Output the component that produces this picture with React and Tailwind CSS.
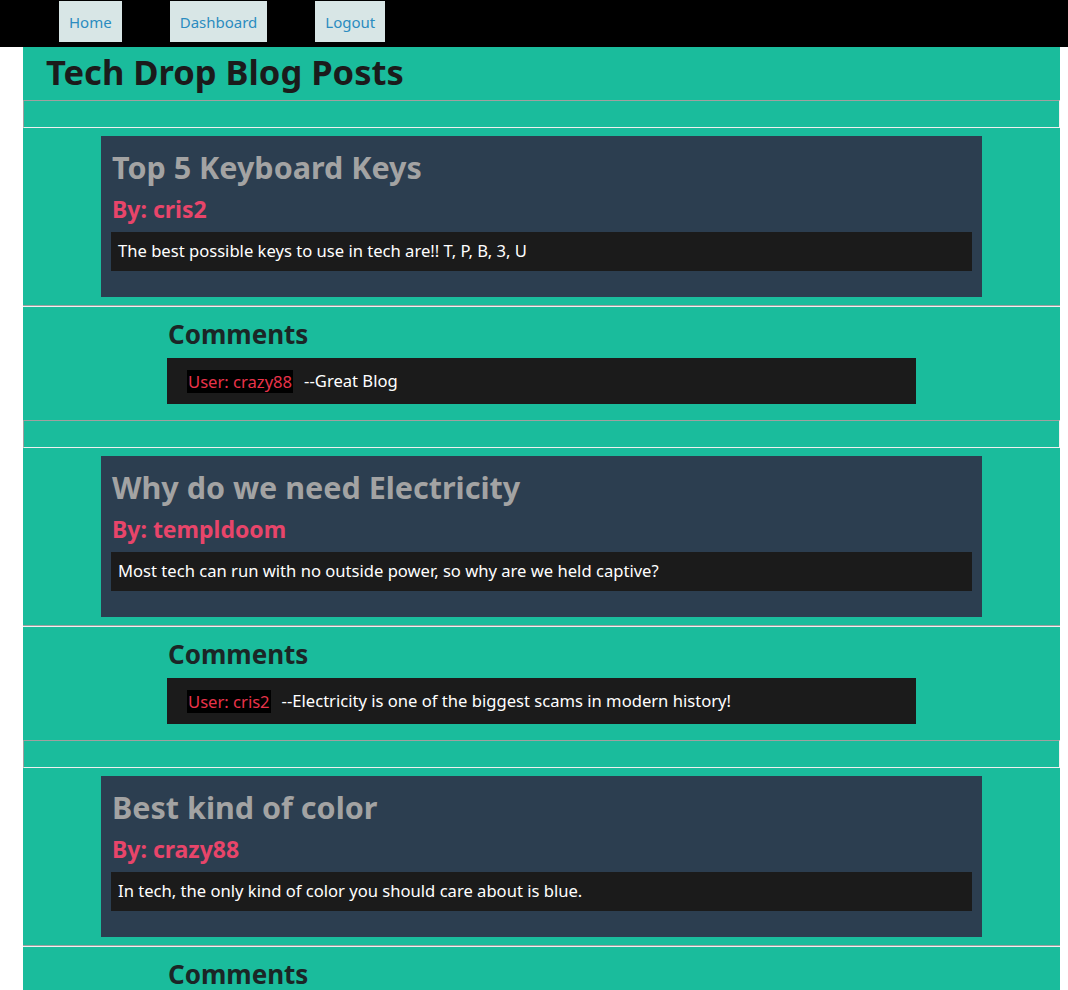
const posts = [
  {
    title: 'Top 5 Keyboard Keys',
    author: 'cris2',
    body: 'The best possible keys to use in tech are!! T, P, B, 3, U',
    comments: [{ user: 'crazy88', text: 'Great Blog' }],
  },
  {
    title: 'Why do we need Electricity',
    author: 'templdoom',
    body: 'Most tech can run with no outside power, so why are we held captive?',
    comments: [{ user: 'cris2', text: 'Electricity is one of the biggest scams in modern history!' }],
  },
  {
    title: 'Best kind of color',
    author: 'crazy88',
    body: 'In tech, the only kind of color you should care about is blue.',
    comments: [],
  },
];

function NavButton({ children }) {
  return (
    <a className="h-[41px] pt-px px-[10px] flex items-center bg-[#d8e6e6] text-[#2b8cc0] text-[15px]">
      {children}
    </a>
  );
}

function Post({ post }) {
  return (
    <>
      <div className="h-[28px] border-t border-l border-t-[#a0a0a0] border-l-[#a0a0a0] border-b border-r border-b-[#f0f0f0] border-r-[#f0f0f0]" />
      <section className="py-[8px]">
        <div className="mx-[78px] bg-[#2c3e50] pt-[11px] px-[10px] pb-[26px]">
          <h2 className="h-[40px] leading-[40px] px-px text-[30.5px] font-bold text-[#a3a3a3]">{post.title}</h2>
          <h3 className="mt-[7px] h-[30px] leading-[30px] px-px text-[23px] font-bold text-[#e8456a]">By: {post.author}</h3>
          <p className="mt-[8px] h-[39px] flex items-center px-[7px] bg-[#1b1b1b] text-white text-[16.6px]">{post.body}</p>
        </div>
      </section>
      <div className="border-t border-t-[#a0a0a0] border-b border-b-[#f0f0f0]" />
      <section className="pt-[11px] pb-[16px]">
        <div className="mx-[144px]">
          <h3 className="h-[32px] leading-[32px] px-px text-[26px] font-bold text-[#1b2626]">Comments</h3>
          {post.comments.map((c, i) => (
            <div key={i} className="mt-[8px] h-[46px] flex items-center px-[20px] bg-[#1b1b1b] text-[16.6px]">
              <span className="bg-black text-[#e8334a] px-px leading-[23px]">User: {c.user}</span>
              <span className="ml-[11px] text-white">--{c.text}</span>
            </div>
          ))}
        </div>
      </section>
    </>
  );
}

export default function App() {
  return (
    <div className="min-h-[990px] bg-white font-['Noto_Sans',sans-serif]">
      <nav className="h-[47px] bg-black flex items-start pt-px pl-[59px] gap-[48px]">
        <NavButton>Home</NavButton>
        <NavButton>Dashboard</NavButton>
        <NavButton>Logout</NavButton>
      </nav>
      <main className="ml-[23px] w-[1037px] bg-[#1abc9c]">
        <h1 className="h-[53px] flex items-center pl-[23px] pb-[4px] text-[34.5px] font-bold text-[#1b1b1b]">Tech Drop Blog Posts</h1>
        {posts.map((p) => (
          <Post key={p.title} post={p} />
        ))}
      </main>
    </div>
  );
}
